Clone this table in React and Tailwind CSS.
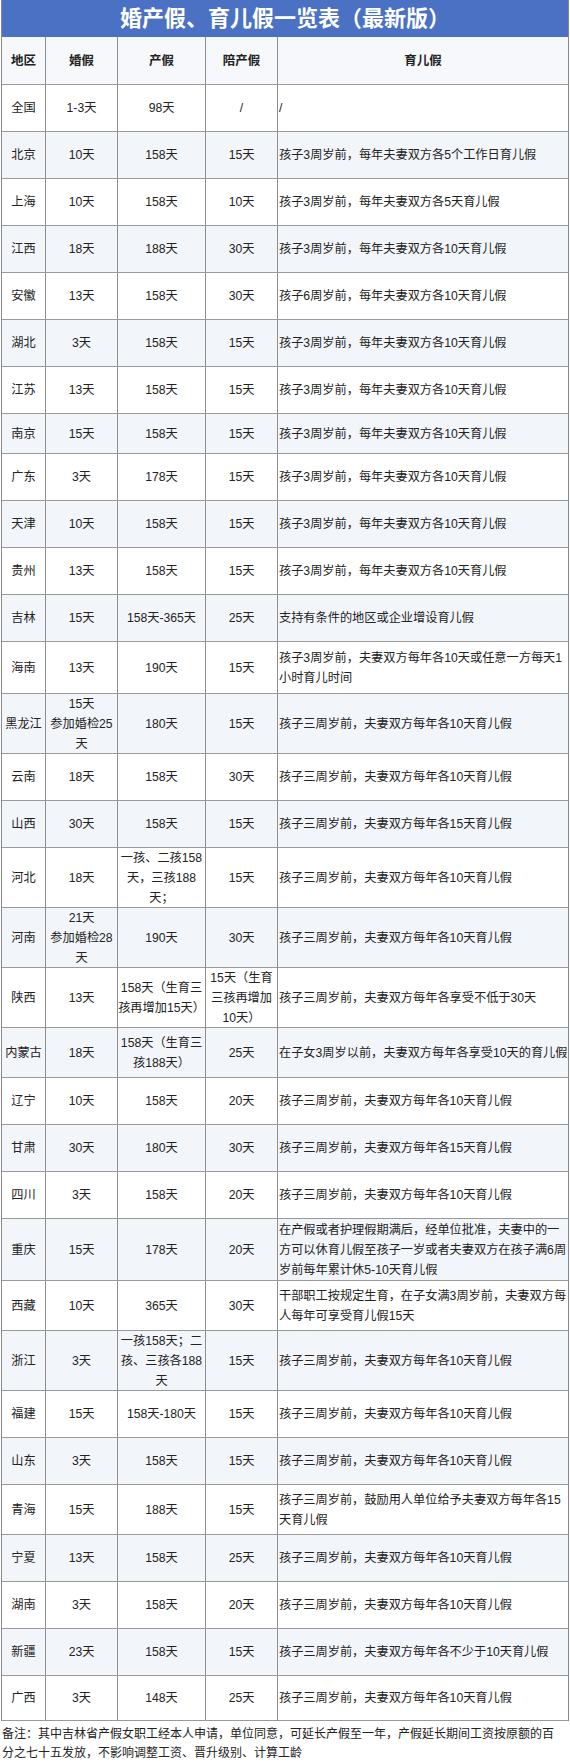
import React from "react";

const S = "h-[47px]";
const rows = [
  { r: "全国", m: "1-3天", c: "98天", p: "/", y: "/", h: S },
  { r: "北京", m: "10天", c: "158天", p: "15天", y: "孩子3周岁前，每年夫妻双方各5个工作日育儿假", h: S },
  { r: "上海", m: "10天", c: "158天", p: "10天", y: "孩子3周岁前，每年夫妻双方各5天育儿假", h: S },
  { r: "江西", m: "18天", c: "188天", p: "30天", y: "孩子3周岁前，每年夫妻双方各10天育儿假", h: S },
  { r: "安徽", m: "13天", c: "158天", p: "30天", y: "孩子6周岁前，每年夫妻双方各10天育儿假", h: S },
  { r: "湖北", m: "3天", c: "158天", p: "15天", y: "孩子3周岁前，每年夫妻双方各10天育儿假", h: S },
  { r: "江苏", m: "13天", c: "158天", p: "15天", y: "孩子3周岁前，每年夫妻双方各10天育儿假", h: S },
  { r: "南京", m: "15天", c: "158天", p: "15天", y: "孩子3周岁前，每年夫妻双方各10天育儿假", h: "h-[40px]" },
  { r: "广东", m: "3天", c: "178天", p: "15天", y: "孩子3周岁前，每年夫妻双方各10天育儿假", h: S },
  { r: "天津", m: "10天", c: "158天", p: "15天", y: "孩子3周岁前，每年夫妻双方各10天育儿假", h: S },
  { r: "贵州", m: "13天", c: "158天", p: "15天", y: "孩子3周岁前，每年夫妻双方各10天育儿假", h: S },
  { r: "吉林", m: "15天", c: "158天-365天", p: "25天", y: "支持有条件的地区或企业增设育儿假", h: S },
  { r: "海南", m: "13天", c: "190天", p: "15天", y: ["孩子3周岁前，夫妻双方每年各10天或任意一方每天1", "小时育儿时间"], h: "h-[52px]" },
  { r: "黑龙江", m: ["15天", "参加婚检25", "天"], c: "180天", p: "15天", y: "孩子三周岁前，夫妻双方每年各10天育儿假", h: "h-[60px]" },
  { r: "云南", m: "18天", c: "158天", p: "30天", y: "孩子三周岁前，夫妻双方每年各10天育儿假", h: S },
  { r: "山西", m: "30天", c: "158天", p: "15天", y: "孩子三周岁前，夫妻双方每年各15天育儿假", h: S },
  { r: "河北", m: "18天", c: ["一孩、二孩158", "天，三孩188", "天；"], p: "15天", y: "孩子三周岁前，夫妻双方每年各10天育儿假", h: "h-[60px]" },
  { r: "河南", m: ["21天", "参加婚检28", "天"], c: "190天", p: "30天", y: "孩子三周岁前，夫妻双方每年各10天育儿假", h: "h-[60px]" },
  { r: "陕西", m: "13天", c: ["158天（生育三", "孩再增加15天）"], p: ["15天（生育", "三孩再增加", "10天）"], y: "孩子三周岁前，夫妻双方每年各享受不低于30天", h: "h-[60px]" },
  { r: "内蒙古", m: "18天", c: ["158天（生育三", "孩188天）"], p: "25天", y: "在子女3周岁以前，夫妻双方每年各享受10天的育儿假", h: "h-[50px]" },
  { r: "辽宁", m: "10天", c: "158天", p: "20天", y: "孩子三周岁前，夫妻双方每年各10天育儿假", h: S },
  { r: "甘肃", m: "30天", c: "180天", p: "30天", y: "孩子三周岁前，夫妻双方每年各15天育儿假", h: S },
  { r: "四川", m: "3天", c: "158天", p: "20天", y: "孩子三周岁前，夫妻双方每年各10天育儿假", h: S },
  { r: "重庆", m: "15天", c: "178天", p: "20天", y: ["在产假或者护理假期满后，经单位批准，夫妻中的一", "方可以休育儿假至孩子一岁或者夫妻双方在孩子满6周", "岁前每年累计休5-10天育儿假"], h: "h-[62px]" },
  { r: "西藏", m: "10天", c: "365天", p: "30天", y: ["干部职工按规定生育，在子女满3周岁前，夫妻双方每", "人每年可享受育儿假15天"], h: "h-[50px]" },
  { r: "浙江", m: "3天", c: ["一孩158天；二", "孩、三孩各188", "天"], p: "15天", y: "孩子三周岁前，夫妻双方每年各10天育儿假", h: "h-[60px]" },
  { r: "福建", m: "15天", c: "158天-180天", p: "15天", y: "孩子三周岁前，夫妻双方每年各10天育儿假", h: S },
  { r: "山东", m: "3天", c: "158天", p: "15天", y: "孩子三周岁前，夫妻双方每年各10天育儿假", h: S },
  { r: "青海", m: "15天", c: "188天", p: "15天", y: ["孩子三周岁前，鼓励用人单位给予夫妻双方每年各15", "天育儿假"], h: "h-[50px]" },
  { r: "宁夏", m: "13天", c: "158天", p: "25天", y: "孩子三周岁前，夫妻双方每年各10天育儿假", h: S },
  { r: "湖南", m: "3天", c: "158天", p: "20天", y: "孩子三周岁前，夫妻双方每年各10天育儿假", h: S },
  { r: "新疆", m: "23天", c: "158天", p: "15天", y: "孩子三周岁前，夫妻双方每年各不少于10天育儿假", h: S },
  { r: "广西", m: "3天", c: "148天", p: "25天", y: "孩子三周岁前，夫妻双方每年各10天育儿假", h: "h-[45px]" },
];

function Lines({ v }) {
  if (Array.isArray(v)) {
    return (
      <div className="leading-[20px]">
        {v.map((l, i) => (
          <div key={i} className="whitespace-nowrap">
            {l}
          </div>
        ))}
      </div>
    );
  }
  return <div className="whitespace-nowrap leading-[20px]">{v}</div>;
}

function Cell({ v, left, last }) {
  return (
    <div
      className={
        "flex items-center " +
        (left ? "justify-start pl-[1px] " : "justify-center text-center ") +
        (last ? "" : "border-r border-[#8e8e8e]")
      }
    >
      <Lines v={v} />
    </div>
  );
}

export default function App() {
  return (
    <div className="w-[570px] bg-white font-['Liberation_Sans','Noto_Sans_CJK_SC',sans-serif] text-[#222]">
      <div className="ml-[1px] w-[568px] border-x border-[#8a8a8a]">
        <div className="flex h-[37px] items-center justify-center bg-[#4a71c3] text-[22px] font-bold text-white">
          婚产假、育儿假一览表（最新版）
        </div>
        <div className="grid h-[48px] grid-cols-[44px_72px_88px_72px_1fr] border-b border-[#9a9a9a] bg-[#f6f8fb] text-[12.5px] font-bold">
          <Cell v="地区" />
          <Cell v="婚假" />
          <Cell v="产假" />
          <Cell v="陪产假" />
          <Cell v="育儿假" last />
        </div>
        {rows.map((row, i) => (
          <div
            key={row.r}
            className={
              "grid grid-cols-[44px_72px_88px_72px_1fr] border-b border-[#9a9a9a] text-[12.2px] " +
              row.h +
              " " +
              (i % 2 === 1 ? "bg-[#f2f5fa]" : "bg-white")
            }
          >
            <Cell v={row.r} />
            <Cell v={row.m} />
            <Cell v={row.c} />
            <Cell v={row.p} />
            <Cell v={row.y} left last />
          </div>
        ))}
      </div>
      <div className="px-[2px] pt-[4px] text-[12px] leading-[19px] text-[#222]">
        <div className="whitespace-nowrap">
          备注：其中吉林省产假女职工经本人申请，单位同意，可延长产假至一年，产假延长期间工资按原额的百
        </div>
        <div className="whitespace-nowrap">分之七十五发放，不影响调整工资、晋升级别、计算工龄</div>
      </div>
    </div>
  );
}
